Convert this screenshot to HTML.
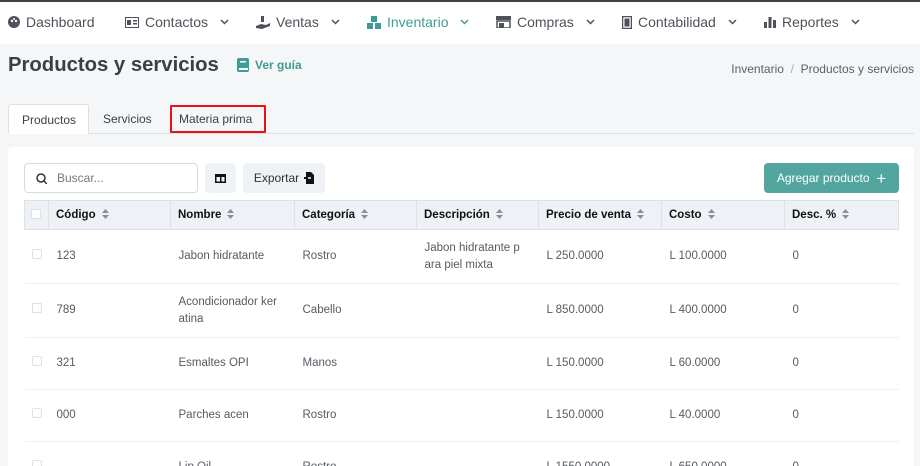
<!DOCTYPE html>
<html><head><meta charset="utf-8"><style>
*{box-sizing:border-box;margin:0;padding:0}
html,body{width:920px;height:466px;overflow:hidden}
body{background:#f5f6f8;font-family:"Liberation Sans",sans-serif;color:#4a4f57;position:relative}
.topline{position:absolute;left:0;top:0;width:920px;height:2px;background:#3c4149}
nav{position:absolute;top:2px;left:0;width:920px;height:42px;background:#fff;font-size:14px;color:#4d525a}
nav span{position:absolute;top:12px;display:flex;align-items:center;gap:6px;white-space:nowrap}
nav .act{color:#3f9c94}
.chev{margin-left:6px}
h1{position:absolute;left:8px;top:54px;font-size:20.3px;font-weight:bold;color:#3a3f47}
.guia{position:absolute;left:237px;top:58px;font-size:12px;font-weight:bold;color:#3f9c94;display:flex;gap:6px;align-items:center}
.bc{position:absolute;right:6px;top:62px;font-size:12px;color:#5b6068}
.tabs{position:absolute;left:8px;top:104px;width:906px;height:30px;border-bottom:1px solid #dcdfe4}
.tab{position:absolute;top:0;height:30px;font-size:12px;line-height:30px;padding:0 13px;color:#3c4148}
.tab.a{background:#fff;border:1px solid #dcdfe4;border-bottom:1px solid #fff;border-radius:3px 3px 0 0}
.red{position:absolute;left:170px;top:105px;width:96px;height:28px;border:2px solid #e8111a;border-radius:1px}
.card{position:absolute;left:8px;top:147px;width:906px;height:319px;background:#fff;border-radius:4px 4px 0 0}
.search{position:absolute;left:24px;top:163px;width:174px;height:30px;border:1px solid #d6d9de;border-radius:4px;font-size:12px;color:#777;line-height:28px;padding-left:32px}
.btn{position:absolute;top:163px;height:30px;background:#eef1f5;border-radius:4px;font-size:12px;color:#333;display:flex;align-items:center;justify-content:center;gap:5px}
.add{position:absolute;left:764px;top:163px;width:135px;height:30px;background:#52a69f;border-radius:4px;color:#fff;font-size:12px;line-height:30px;text-align:center}
.tw{position:absolute;left:24px;top:200px;width:875px;height:266px;overflow:hidden}
table{border-collapse:collapse;width:875px;font-size:11.5px;table-layout:fixed}
th{background:#eef1f6;height:29px;text-align:left;font-weight:bold;color:#111;padding-left:7px;border:1px solid #dde1e7}
th svg{margin-left:6px;vertical-align:-1px}
td{padding-left:8px;color:#555a62;border-bottom:1px solid #eef0f3;line-height:17px}
tr.r54 td{height:54px}
tr.r52 td{height:52px}
.cb{width:10px;height:10px;border:1px solid #dde0e4;border-radius:2px;display:inline-block;background:#fff}
</style></head><body>
<div class="topline"></div>
<nav>
<span style="left:8px"><svg width="12" height="12" viewBox="0 0 12 12"><circle cx="6" cy="6" r="6" fill="#4d525a"/><circle cx="4" cy="5" r="1.2" fill="#fff"/><circle cx="8" cy="5" r="1.2" fill="#fff"/><circle cx="6" cy="3" r="1" fill="#fff"/></svg>Dashboard</span>
<span style="left:125px"><svg width="14" height="11"><rect x="0.5" y="0.5" width="13" height="10" fill="none" stroke="#4d525a"/><rect x="2" y="3" width="4" height="5" fill="#4d525a"/><rect x="8" y="3" width="4" height="1.5" fill="#4d525a"/><rect x="8" y="6" width="4" height="1.5" fill="#4d525a"/></svg>Contactos<svg class="chev" width="9" height="6"><path d="M1 1 L4.5 4.5 L8 1" fill="none" stroke="#4d525a" stroke-width="1.5"/></svg></span>
<span style="left:256px"><svg width="14" height="13"><rect x="5" y="0" width="3" height="6" fill="#4d525a"/><path d="M0 10 L5 8 L10 9 L14 7 L14 10 L6 13 L0 12Z" fill="#4d525a"/></svg>Ventas<svg class="chev" width="9" height="6"><path d="M1 1 L4.5 4.5 L8 1" fill="none" stroke="#4d525a" stroke-width="1.5"/></svg></span>
<span class="act" style="left:367px"><svg width="14" height="13"><rect x="4" y="0" width="6" height="6" fill="#3f9c94"/><rect x="0" y="7" width="6" height="6" fill="#3f9c94"/><rect x="8" y="7" width="6" height="6" fill="#3f9c94"/></svg>Inventario<svg class="chev" width="9" height="6"><path d="M1 1 L4.5 4.5 L8 1" fill="none" stroke="#3f9c94" stroke-width="1.5"/></svg></span>
<span style="left:496px"><svg width="15" height="12"><rect x="0" y="0" width="15" height="4" fill="#4d525a"/><rect x="1" y="5" width="13" height="7" fill="none" stroke="#4d525a" stroke-width="1.5"/><rect x="3" y="7" width="5" height="5" fill="#4d525a"/></svg>Compras<svg class="chev" width="9" height="6"><path d="M1 1 L4.5 4.5 L8 1" fill="none" stroke="#4d525a" stroke-width="1.5"/></svg></span>
<span style="left:622px"><svg width="10" height="13"><rect x="0.5" y="0.5" width="9" height="12" fill="none" stroke="#4d525a" stroke-width="1.5"/><rect x="2.5" y="2.5" width="5" height="8" fill="#4d525a"/></svg>Contabilidad<svg class="chev" width="9" height="6"><path d="M1 1 L4.5 4.5 L8 1" fill="none" stroke="#4d525a" stroke-width="1.5"/></svg></span>
<span style="left:764px"><svg width="12" height="11"><rect x="0" y="5" width="3" height="6" fill="#4d525a"/><rect x="4.5" y="0" width="3" height="11" fill="#4d525a"/><rect x="9" y="3" width="3" height="8" fill="#4d525a"/></svg>Reportes<svg class="chev" width="9" height="6"><path d="M1 1 L4.5 4.5 L8 1" fill="none" stroke="#4d525a" stroke-width="1.5"/></svg></span>
</nav>
<h1>Productos y servicios</h1>
<div class="guia"><svg width="12" height="14"><rect x="0" y="0" width="12" height="14" rx="2" fill="#3f9c94"/><rect x="2" y="10" width="9" height="2" fill="#fff"/><rect x="3" y="3" width="6" height="1.5" fill="#fff"/></svg>Ver guía</div>
<div class="bc">Inventario &nbsp;<span style="color:#aaa">/</span>&nbsp; Productos y servicios</div>
<div class="tabs">
<div class="tab a" style="left:0;width:81px">Productos</div>
<div class="tab" style="left:82px">Servicios</div>
<div class="tab" style="left:158px">Materia prima</div>
</div>
<div class="red"></div>
<div class="card"></div>
<div class="search"><svg style="position:absolute;left:11px;top:9px" width="11" height="11"><circle cx="5" cy="5" r="4" fill="none" stroke="#333" stroke-width="1.5"/><path d="M8 8 L11 11" stroke="#333" stroke-width="1.5"/></svg>Buscar...</div>
<div class="btn" style="left:205px;width:31px"><svg width="11" height="9"><rect x="0.75" y="0.75" width="9.5" height="7.5" fill="none" stroke="#111" stroke-width="1.5"/><rect x="0" y="0" width="11" height="3" fill="#111"/><rect x="5" y="0" width="1.5" height="9" fill="#111"/></svg></div>
<div class="btn" style="left:243px;width:82px">Exportar <svg width="10" height="12"><path d="M2 0 H7 L10 3 V12 H2Z" fill="#111"/><path d="M0 6 H5" stroke="#111" stroke-width="2"/><path d="M4 6 H7" stroke="#fff" stroke-width="1.5"/></svg></div>
<div class="add">Agregar producto &nbsp;<span style="font-size:17px;vertical-align:-2px">+</span></div>
<div class="tw">
<table>
<colgroup><col style="width:24px"><col style="width:122px"><col style="width:124px"><col style="width:122px"><col style="width:122px"><col style="width:123px"><col style="width:123px"><col></colgroup>
<tr><th style="padding-left:6px"><span class="cb"></span></th>
<th>Código<svg width="7" height="10"><path d="M0 4 L3.5 0 L7 4Z M0 6 L3.5 10 L7 6Z" fill="#8a8f98"/></svg></th>
<th>Nombre<svg width="7" height="10"><path d="M0 4 L3.5 0 L7 4Z M0 6 L3.5 10 L7 6Z" fill="#8a8f98"/></svg></th>
<th>Categoría<svg width="7" height="10"><path d="M0 4 L3.5 0 L7 4Z M0 6 L3.5 10 L7 6Z" fill="#8a8f98"/></svg></th>
<th>Descripción<svg width="7" height="10"><path d="M0 4 L3.5 0 L7 4Z M0 6 L3.5 10 L7 6Z" fill="#8a8f98"/></svg></th>
<th>Precio de venta<svg width="7" height="10"><path d="M0 4 L3.5 0 L7 4Z M0 6 L3.5 10 L7 6Z" fill="#8a8f98"/></svg></th>
<th>Costo<svg width="7" height="10"><path d="M0 4 L3.5 0 L7 4Z M0 6 L3.5 10 L7 6Z" fill="#8a8f98"/></svg></th>
<th>Desc. %<svg width="7" height="10"><path d="M0 4 L3.5 0 L7 4Z M0 6 L3.5 10 L7 6Z" fill="#8a8f98"/></svg></th></tr>
<tr class="r54"><td style="padding-left:7px"><span class="cb"></span></td><td>123</td><td>Jabon hidratante</td><td>Rostro</td><td>Jabon hidratante p<br>ara piel mixta</td><td>L 250.0000</td><td>L 100.0000</td><td>0</td></tr>
<tr class="r54"><td style="padding-left:7px"><span class="cb"></span></td><td>789</td><td>Acondicionador ker<br>atina</td><td>Cabello</td><td></td><td>L 850.0000</td><td>L 400.0000</td><td>0</td></tr>
<tr class="r52"><td style="padding-left:7px"><span class="cb"></span></td><td>321</td><td>Esmaltes OPI</td><td>Manos</td><td></td><td>L 150.0000</td><td>L 60.0000</td><td>0</td></tr>
<tr class="r52"><td style="padding-left:7px"><span class="cb"></span></td><td>000</td><td>Parches acen</td><td>Rostro</td><td></td><td>L 150.0000</td><td>L 40.0000</td><td>0</td></tr>
<tr class="r52"><td style="padding-left:7px"><span class="cb"></span></td><td></td><td>Lip Oil</td><td>Rostro</td><td></td><td>L 1550.0000</td><td>L 650.0000</td><td>0</td></tr>
</table>
</div>
</body></html>
